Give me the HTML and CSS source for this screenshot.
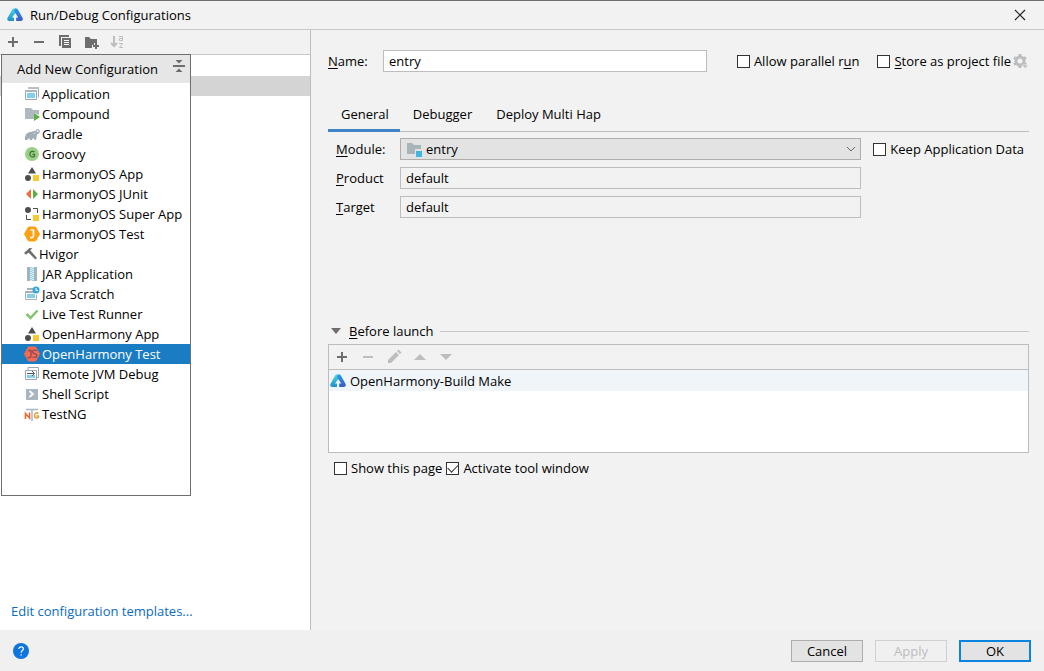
FILE: index.html
```html
<!DOCTYPE html>
<html lang="en">
<head>
<meta charset="utf-8">
<title>Run/Debug Configurations</title>
<link rel="stylesheet" href="styles.css">
</head>
<body>
<svg class="defs" width="0" height="0" aria-hidden="true">
  <defs>
    <linearGradient id="cyan" x1="0" y1="0" x2="0" y2="1"><stop offset="0" stop-color="#4fd8e2"/><stop offset="1" stop-color="#1d8fc9"/></linearGradient>
    <linearGradient id="blue" x1="0" y1="0" x2="0" y2="1"><stop offset="0" stop-color="#2a9bf0"/><stop offset="1" stop-color="#3a5cc0"/></linearGradient>
    <symbol id="logo" viewBox="0 0 16 16">
      <path d="M5.800 1.500h3.200L10 4 5 10.500h2v3.500H2.200C.6 14-.2 12.300.6 10.800z" fill="url(#cyan)"/>
      <path d="M8 1.500h1.400q.9 0 1.500 1l4.600 8.300c.8 1.500 0 3.200-1.700 3.200H9.200v-3.500h2L7 4z" fill="url(#blue)"/>
    </symbol>
    <symbol id="shapes" viewBox="0 0 16 16">
      <path d="M8 1l4 6.500H4z" fill="#4d4d4d"/><circle cx="4" cy="12" r="3" fill="#4d4d4d"/><path d="M9 9h6v6H9z" fill="#f9c932"/>
    </symbol>
  </defs>
</svg>
<div class="dialog">
  <header class="titlebar">
    <svg class="icon"><use href="#logo"/></svg>
    <h1 class="title">Run/Debug Configurations</h1>
    <button class="close" aria-label="Close"><svg width="12" height="12" viewBox="0 0 12 12"><path d="M1 1l10 10M11 1L1 11" stroke="#222" stroke-width="1.200"/></svg></button>
  </header>
  <main class="content">
    <section class="sidebar">
      <div class="toolbar">
        <button class="tool" aria-label="Add"><svg class="icon" viewBox="0 0 16 16"><path d="M3 8h10M8 3v10" stroke="#6e6e6e" stroke-width="2"/></svg></button>
        <button class="tool" aria-label="Remove"><svg class="icon" viewBox="0 0 16 16"><path d="M3 8h10" stroke="#6e6e6e" stroke-width="2"/></svg></button>
        <button class="tool" aria-label="Copy"><svg class="icon" viewBox="0 0 16 16"><path d="M2 1h10v2H4v9H2z" fill="#6e6e6e"/><path d="M5 4h9v10H5z" fill="#6e6e6e"/><path d="M7 6.500h5M7 8.500h5M7 10.500h5" stroke="#fff"/></svg></button>
        <button class="tool" aria-label="New folder"><svg class="icon" viewBox="0 0 16 16"><path d="M2 3h4l2 2h6v4h-3v2H9v3H2z" fill="#6e6e6e"/><path d="M10 12h6M13 9v6" stroke="#6e6e6e" stroke-width="2"/></svg></button>
        <button class="tool" aria-label="Sort" disabled><svg class="icon" viewBox="0 0 16 16"><path d="M5 2v10M2 9l3 3 3-3" stroke="#bdbdbd" stroke-width="2" fill="none"/><path d="M10 2.500h3.500v4h-3v-2h3M10 9.500h3.500l-3 4H14" stroke="#bdbdbd" fill="none"/></svg></button>
      </div>
      <div class="tree"><div class="tree-selected"></div></div>
      <a class="templates" href="#templates">Edit configuration templates...</a>
      <div class="popup">
        <div class="popup-head">
          <h2 class="popup-title">Add New Configuration</h2>
          <button class="tool collapse" aria-label="Collapse"><svg class="icon" viewBox="0 0 16 16"><path d="M2 8h12" stroke="#6e6e6e" stroke-width="2"/><path d="M4.500 2h7L8 5.500zM4.500 14h7L8 10.500z" fill="#6e6e6e"/></svg></button>
        </div>
        <ul class="types">
          <li class="type"><svg class="icon" viewBox="0 0 16 16"><path d="M4.500 2.500h10v9" stroke="#9aa7b0" fill="none"/><path d="M4 1h11v2H4z" fill="#b5c0c7"/><path d="M1.500 4.500h11v9h-11z" fill="#fff" stroke="#9aa7b0"/><path d="M1 4h12v2H1z" fill="#aab5bc"/><path d="M3 7h8v5H3z" fill="#7fd0ee"/></svg>Application</li>
          <li class="type"><svg class="icon" viewBox="0 0 16 16"><path d="M1 2h6l2 2h6v5l-5-2v6H1z" fill="#afb9c0"/><path d="M10 7l6 4-6 4z" fill="#59b043"/></svg>Compound</li>
          <li class="type"><svg class="icon" viewBox="0 0 16 16"><path d="M1 14C.5 9 3 6 7 6l3-1c1.500-.8 3 0 3.500 1 .8.300 1.400-.5.900-1.200-.5-.8-1.500-.3-2 .1l-.5-1c1-1.300 3-1 3.600.3.800 2-.2 3.600-2 4-1 1.300-1 3.300-1.200 5.600h-2l-.5-1.600-1.300.3-.5 1.500H6l-.6-1.600-1.400.2L3.500 14z" fill="#a0aeb6"/><circle cx="10.500" cy="7.500" r=".6" fill="#fff"/></svg>Gradle</li>
          <li class="type"><svg class="icon" viewBox="0 0 16 16"><circle cx="8" cy="8" r="7" fill="#98d185"/><path d="M10.500 6.200C9.500 5 6 4.900 5.800 8c0 3.200 3.300 3.400 4.700 2.200V8.300H8.400" fill="none" stroke="#456b3b" stroke-width="1.300"/></svg>Groovy</li>
          <li class="type"><svg class="icon"><use href="#shapes"/></svg>HarmonyOS App</li>
          <li class="type"><svg class="icon" viewBox="0 0 16 16"><path d="M7 3v10L2 8z" fill="#f26b3a"/><path d="M9 3v10l5-5z" fill="#59b043"/></svg>HarmonyOS JUnit</li>
          <li class="type"><svg class="icon" viewBox="0 0 16 16"><circle cx="4" cy="4" r="3" fill="#4d4d4d"/><path d="M9 2.500h4.500V7M2.500 9v4.500H7" stroke="#4d4d4d" fill="none"/><path d="M9 9h6v6H9z" fill="#f9c932"/></svg>HarmonyOS Super App</li>
          <li class="type"><svg class="icon" viewBox="0 0 16 16"><path d="M4.500 1h7L15.500 8l-4 7h-7L.5 8z" fill="#ffa010" stroke="#ffa010" stroke-linejoin="round"/><path d="M6.500 4h3v5.500q0 2.500-3.500 2" stroke="#fff" stroke-width="1.700" fill="none"/></svg>HarmonyOS Test</li>
          <li class="type"><svg class="icon icon-narrow" viewBox="0 0 13 16"><path d="M0 7l5.500-5 3 .3L6.400 4l.9 1.400L13 12l-1.600 1.600L5.500 7.500 4 6.800 2 8.700z" fill="#6e6e6e"/></svg>Hvigor</li>
          <li class="type"><svg class="icon" viewBox="0 0 16 16"><path d="M3 1h3v14H3zM10 1h3v14h-3z" fill="#a5b2ba"/><path d="M6 1h4v14H6z" fill="#d7f0fa"/><path d="M7 1v14M9 2v13" stroke="#56b9df" stroke-dasharray="1 1"/></svg>JAR Application</li>
          <li class="type"><svg class="icon" viewBox="0 0 16 16"><path d="M3 2h7v2H3zM1 5h9v2H1z" fill="#a5b2ba"/><path d="M1.500 6.500v7h11v-5" stroke="#a5b2ba" fill="none"/><path d="M3 8h8v4H3z" fill="#85cfea"/><circle cx="12" cy="4" r="3.500" fill="#35a9dc"/><path d="M12 2v2.500h2" stroke="#fff" fill="none"/></svg>Java Scratch</li>
          <li class="type"><svg class="icon" viewBox="0 0 16 16"><path d="M2.500 8l4 4 7-7.500" stroke="#80c66d" stroke-width="2.500" fill="none"/></svg>Live Test Runner</li>
          <li class="type"><svg class="icon"><use href="#shapes"/></svg>OpenHarmony App</li>
          <li class="type type-selected"><svg class="icon" viewBox="0 0 16 16"><path d="M4.500 1h7L15.500 8l-4 7h-7L.5 8z" fill="#f76b50" stroke="#f76b50" stroke-linejoin="round"/><path d="M4 4.500h3v5.500q0 2-3.500 1.500M13 4.700c-3-1-4.500-.5-4.500 1.200 0 2.300 4.300 1.200 4.300 3.600 0 2-2 2.300-4.500 1.500" stroke="#8a4a5a" stroke-width="1.300" fill="none"/></svg>OpenHarmony Test</li>
          <li class="type"><svg class="icon" viewBox="0 0 16 16"><path d="M4 4V1.500h10.500v10H13" stroke="#9aa7b0" fill="none"/><path d="M1.500 4.500h11v9h-11z" fill="#fff" stroke="#9aa7b0"/><path d="M3 9h8v3H3z" fill="#85cfea"/><path d="M3 7.500h7M8 5l2.500 2.500L8 10" stroke="#555" fill="none"/></svg>Remote JVM Debug</li>
          <li class="type"><svg class="icon" viewBox="0 0 16 16"><path d="M2 3h12v11H2z" fill="#a9b6be"/><path d="M5.500 5l3.500 3-3.500 3" stroke="#fff" stroke-width="1.700" fill="none"/></svg>Shell Script</li>
          <li class="type"><svg class="icon" viewBox="0 0 16 16"><path d="M2 3.500h12M8 3v12" stroke="#a9b6be" stroke-width="1.500"/><path d="M1.500 13V7.500l4 4.500V6.500" stroke="#e8662f" stroke-width="1.600" fill="none"/><path d="M14.500 7.500c-2-1.300-4-.5-4 2s2.500 3.200 4 2V10h-2" stroke="#dba03a" stroke-width="1.500" fill="none"/></svg>TestNG</li>
        </ul>
      </div>
    </section>
    <section class="editor">
      <div class="name-row">
        <label class="name-label" for="name"><u>N</u>ame:</label>
        <input class="field name-field" id="name" type="text" value="entry">
        <label class="check parallel"><input class="box" type="checkbox"><span>Allow parallel r<u>u</u>n</span></label>
        <label class="check"><input class="box" type="checkbox"><span><u>S</u>tore as project file</span></label>
        <button class="tool gear" aria-label="Storage options" disabled><svg class="icon" viewBox="0 0 16 16"><circle cx="7" cy="8" r="4" fill="none" stroke="#bdbdbd" stroke-width="3"/><path d="M7 1v3M7 12v3M1 4.500l2.500 1.500M10.500 10l2.500 1.500M1 11.500L3.500 10M10.500 6L13 4.500" stroke="#bdbdbd" stroke-width="3"/><path d="M9 12h6.500L12 15.500z" fill="#bdbdbd" stroke="#f2f2f2" stroke-width=".6"/></svg></button>
      </div>
      <nav class="tabs">
        <button class="tab tab-active">General</button>
        <button class="tab">Debugger</button>
        <button class="tab">Deploy Multi Hap</button>
      </nav>
      <div class="form">
        <label for="module"><u>M</u>odule:</label>
        <div class="select-wrap">
          <select class="field module" id="module"><option>entry</option></select>
          <svg class="icon module-icon" viewBox="0 0 16 16"><path d="M1 2h5l2 2h7v4H9v5H1z" fill="#a8b3ba"/><path d="M10 10h6v6h-6z" fill="#40b6e0"/></svg>
          <svg class="chevron" width="10" height="6" viewBox="0 0 10 6"><path d="M1 1l4 4 4-4" stroke="#666" fill="none"/></svg>
        </div>
        <label class="check"><input class="box" type="checkbox"><span>Keep Application Data</span></label>
        <label for="product"><u>P</u>roduct</label>
        <input class="field readonly" id="product" type="text" value="default" readonly>
        <span></span>
        <label for="target"><u>T</u>arget</label>
        <input class="field readonly" id="target" type="text" value="default" readonly>
        <span></span>
      </div>
      <div class="section-head">
        <button class="toggle"><svg width="10" height="6" viewBox="0 0 10 6"><path d="M0 0h10L5 6z" fill="#6e6e6e"/></svg><span><u>B</u>efore launch</span></button>
        <span class="rule"></span>
      </div>
      <div class="tasks">
        <div class="task-tools">
          <button class="tool" aria-label="Add task"><svg class="icon" viewBox="0 0 16 16"><path d="M3 8h10M8 3v10" stroke="#6e6e6e" stroke-width="2"/></svg></button>
          <button class="tool" aria-label="Remove task" disabled><svg class="icon" viewBox="0 0 16 16"><path d="M3 8h10" stroke="#bdbdbd" stroke-width="2"/></svg></button>
          <button class="tool" aria-label="Edit task" disabled><svg class="icon" viewBox="0 0 16 16"><path d="M2 11l8-8 3 3-8 8H2zM11 2l1.500-1.500 3 3L14 5z" fill="#bdbdbd"/></svg></button>
          <button class="tool" aria-label="Move up" disabled><svg class="icon" viewBox="0 0 16 16"><path d="M2 11h12L8 5z" fill="#bdbdbd"/></svg></button>
          <button class="tool" aria-label="Move down" disabled><svg class="icon" viewBox="0 0 16 16"><path d="M2 5h12l-6 6z" fill="#bdbdbd"/></svg></button>
        </div>
        <div class="task"><svg class="icon"><use href="#logo"/></svg>OpenHarmony-Build Make</div>
      </div>
      <div class="launch-options">
        <label class="check"><input class="box" type="checkbox"><span>Show this page</span></label>
        <label class="check"><input class="box" type="checkbox" checked><span>Activate tool window</span></label>
      </div>
    </section>
  </main>
  <footer class="footer">
    <button class="help" aria-label="Help"><svg class="icon" viewBox="0 0 16 16"><circle cx="8" cy="8" r="8" fill="#0b74de"/><path d="M5.800 6c0-3 4.600-2.800 4.600-.2 0 1.700-2.300 1.800-2.300 4" stroke="#fff" stroke-width="1.200" fill="none"/><path d="M7.500 11.200h1.300v1.300H7.500z" fill="#fff"/></svg></button>
    <button class="button">Cancel</button>
    <button class="button" disabled>Apply</button>
    <button class="button button-default">OK</button>
  </footer>
</div>
</body>
</html>
```
FILE: styles.css
```css
* { box-sizing: border-box; }
body {
  margin: 0;
  font: 13px/20px "Open Sans", "Noto Sans", sans-serif;
  color: #000;
  background: #f2f2f2;
}
button, input, select { font: inherit; color: inherit; margin: 0; }
button { padding: 0; border: 0; background: none; }
h1, h2, ul { margin: 0; padding: 0; font: inherit; list-style: none; }
u { text-underline-offset: 2px; text-decoration-skip-ink: none; }

.defs { position: absolute; }
.icon { width: 16px; height: 16px; flex: none; display: block; }
.icon-narrow { width: 13px; }
.tool { flex: none; }

.dialog { min-height: 100vh; display: flex; flex-direction: column; border-top: 1px solid #6e6e6e; }
.titlebar { display: flex; align-items: center; gap: 7px; height: 29px; padding: 0 18px 0 7px; border-bottom: 1px solid #c8c8c8; }
.title { flex: 1; }
.close { display: flex; }
.content { flex: 1; display: flex; }

.sidebar { position: relative; width: 311px; flex: none; display: flex; flex-direction: column; background: #fff; border-right: 1px solid #bdbdbd; }
.toolbar { display: flex; align-items: center; gap: 10px; height: 25px; padding: 0 5px; background: #f2f2f2; border-bottom: 1px solid #c8c8c8; }
.tree { flex: 1; padding-top: 21px; }
.tree-selected { height: 20px; background: #d4d4d4; }
.templates { margin: 0 11px 9px; color: #0a6cc4; text-decoration: none; }

.popup { position: absolute; left: 1px; top: 24px; width: 190px; height: 442px; background: #fff; border: 1px solid #6e6e6e; }
.popup-head { display: flex; align-items: flex-start; justify-content: space-between; height: 28px; padding: 3px 3px 0 15px; background: #e6e6e6; }
.popup-title { line-height: 22px; }
.types { padding-top: 1px; }
.type { display: flex; align-items: center; gap: 2px; height: 20px; padding-left: 22px; line-height: 18px; white-space: nowrap; }
.type-selected { background: #1a7dc4; color: #fff; }

.editor { flex: 1; min-width: 0; padding: 20px 15px 0 17px; }
.field { height: 22px; padding: 0 5px; border: 1px solid #bdbdbd; border-radius: 0; background: #fff; min-width: 0; width: 100%; outline: 0; }
.name-row { display: flex; align-items: center; }
.name-label { width: 55px; flex: none; }
.name-field { flex: 1; }
.check { display: flex; align-items: center; gap: 4px; white-space: nowrap; }
.parallel { margin: 0 18px 0 30px; }
.gear { margin-left: 2px; }
.box { appearance: none; width: 13px; height: 13px; border: 1px solid #333; background: #fff; flex: none; display: grid; place-items: center; }
.box:checked::after { content: ""; width: 9px; height: 5px; margin-top: -3px; border: solid #333; border-width: 0 0 1px 1px; transform: rotate(-45deg); }

.tabs { display: flex; margin-top: 27px; border-bottom: 1px solid #bdbdbd; }
.tab { height: 33px; padding: 0 11px 0 13px; margin-bottom: -1px; border-bottom: 3px solid transparent; }
.tab-active { border-bottom-color: #4083c9; }

.form { display: grid; grid-template-columns: 64px minmax(0, 1fr) auto; align-items: center; row-gap: 7px; padding: 6px 5px 0 8px; }
.form .check { margin-left: 12px; }
.readonly { background: #f2f2f2; }
.select-wrap { position: relative; display: flex; }
.module { appearance: none; padding-left: 25px; background: #e3e3e3; border-color: #adadad; }
.module-icon { position: absolute; left: 6px; top: 3px; pointer-events: none; }
.chevron { position: absolute; right: 5px; top: 8px; pointer-events: none; }

.section-head { display: flex; align-items: center; gap: 6px; margin-top: 103px; padding-left: 3px; }
.toggle { display: flex; align-items: center; gap: 8px; }
.rule { flex: 1; height: 1px; background: #c8c8c8; }

.tasks { height: 109px; margin-top: 3px; border: 1px solid #bdbdbd; background: #fff; }
.task-tools { display: flex; align-items: center; gap: 10px; height: 25px; padding: 0 5px; background: #f2f2f2; border-bottom: 1px solid #bdbdbd; }
.task { display: flex; align-items: center; gap: 4px; height: 21px; padding-left: 1px; background: #f0f5fa; }
.launch-options { display: flex; gap: 4px; padding: 5px 6px; }

.footer { display: flex; align-items: center; gap: 12px; height: 41px; padding: 0 13px; background: #f0f0f0; }
.help { margin-right: auto; }
.button { width: 72px; height: 22px; border: 1px solid #adadad; background: #e3e3e3; line-height: 20px; }
.button:disabled { color: #bdbdbd; background: #f0f0f0; border-color: #d0d0d0; }
.button-default { border: 2px solid #0a84de; line-height: 18px; }
```
